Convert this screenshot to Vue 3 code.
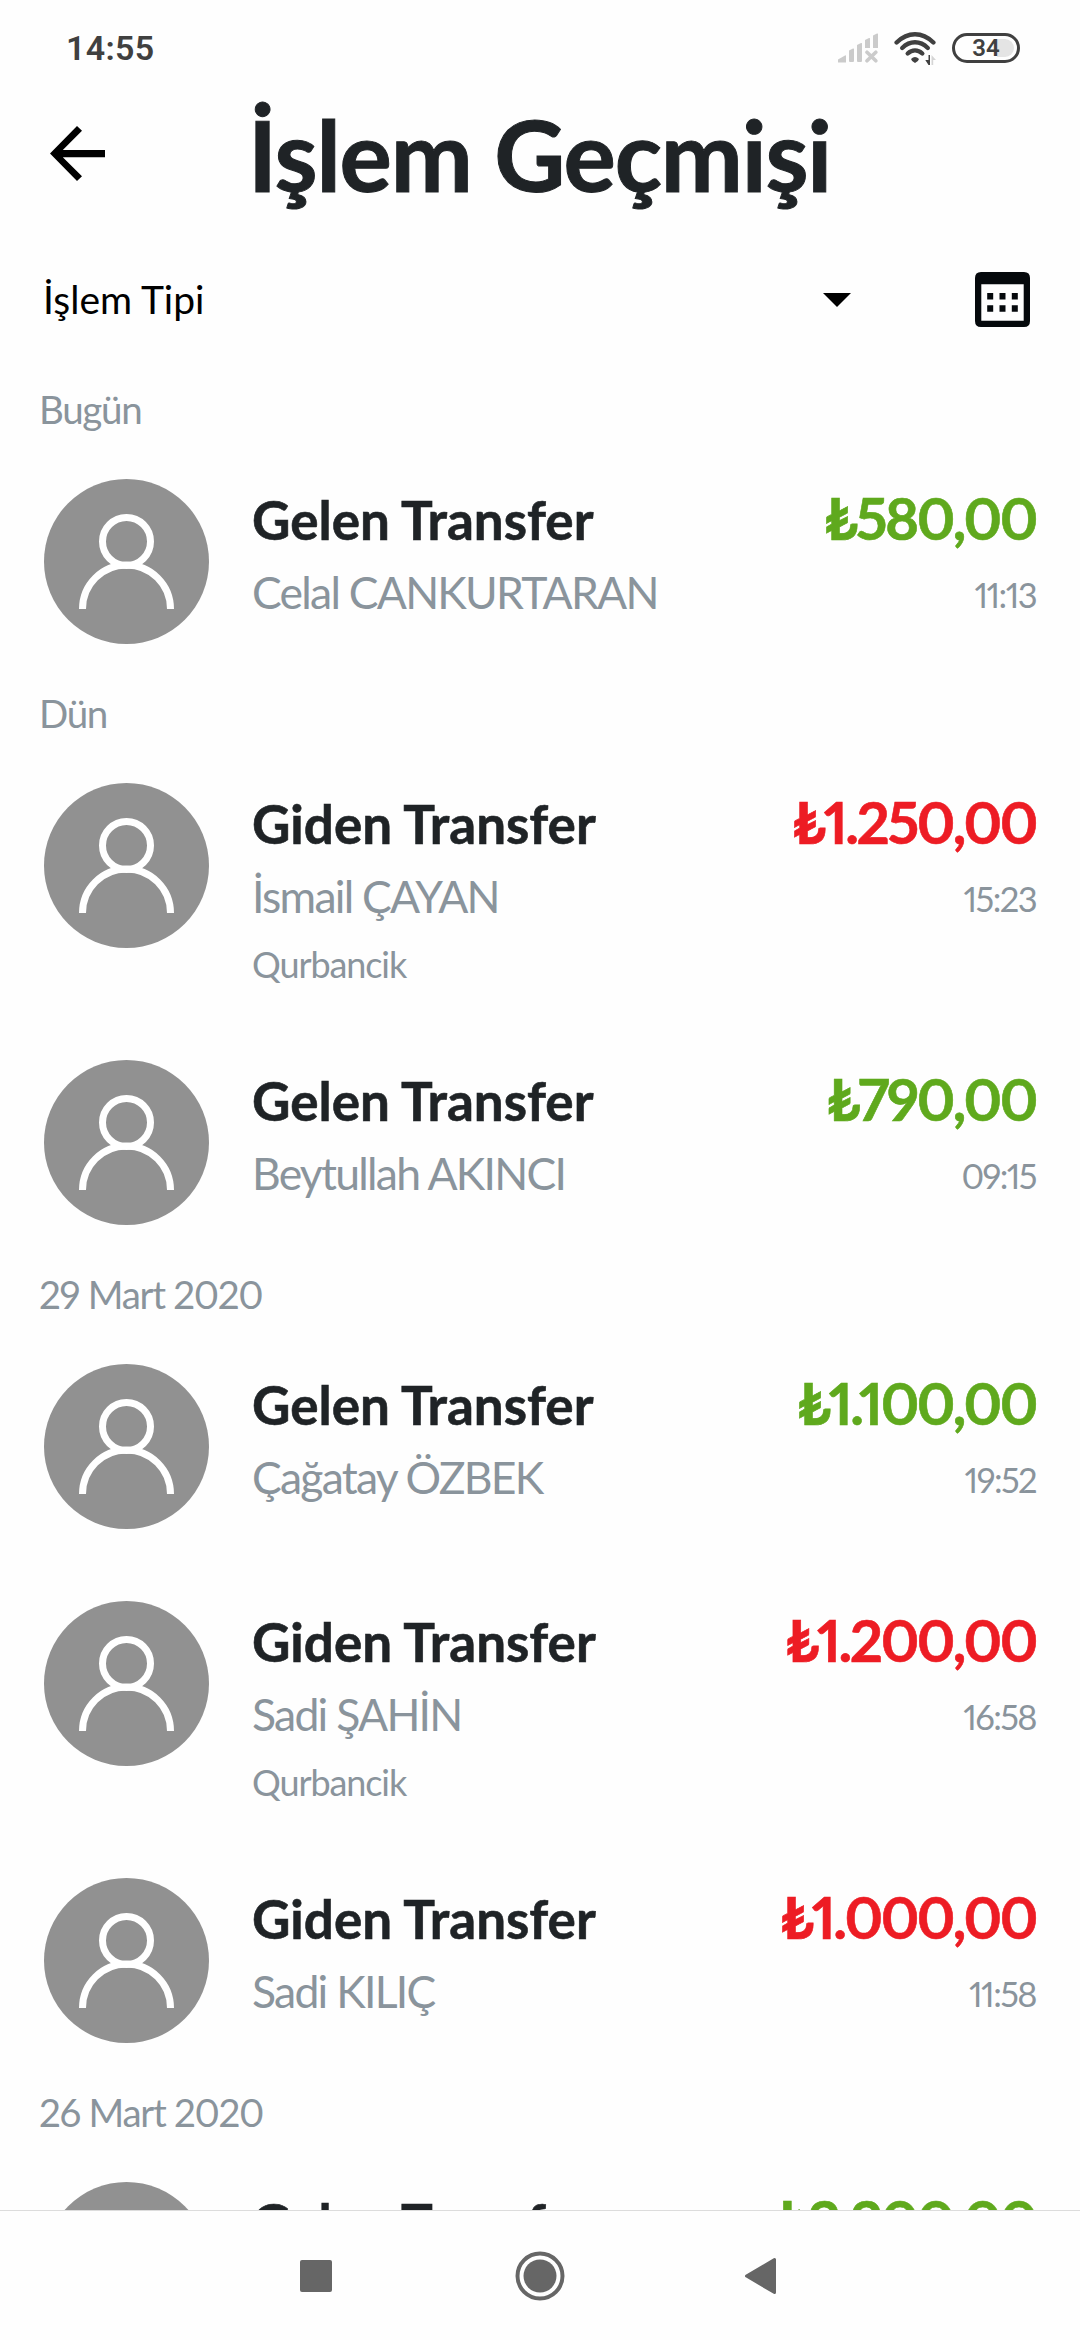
<script setup>
const groups = [
  {
    label: 'Bugün',
    items: [
      { type: 'Gelen Transfer', person: 'Celal CANKURTARAN', amount: '₺580,00', time: '11:13', incoming: true }
    ]
  },
  {
    label: 'Dün',
    items: [
      { type: 'Giden Transfer', person: 'İsmail ÇAYAN', note: 'Qurbancik', amount: '₺1.250,00', time: '15:23' },
      { type: 'Gelen Transfer', person: 'Beytullah AKINCI', amount: '₺790,00', time: '09:15', incoming: true }
    ]
  },
  {
    label: '29 Mart 2020',
    items: [
      { type: 'Gelen Transfer', person: 'Çağatay ÖZBEK', amount: '₺1.100,00', time: '19:52', incoming: true },
      { type: 'Giden Transfer', person: 'Sadi ŞAHİN', note: 'Qurbancik', amount: '₺1.200,00', time: '16:58' },
      { type: 'Giden Transfer', person: 'Sadi KILIÇ', amount: '₺1.000,00', time: '11:58' }
    ]
  },
  {
    label: '26 Mart 2020',
    items: [{ type: 'Gelen Transfer', amount: '₺2.200,00', incoming: true }]
  }
]
</script>

<template>
  <div class="screen">
    <div class="status">
      <span class="clock">14:55</span>
      <div class="status-icons">
        <svg class="signal" width="40" height="30" viewBox="0 0 40 30" fill="#cbcbcb">
          <path d="M0 29.5v-3l7-4q1-.5 1 .5v6.5zM11 17.5l4-2q1-.4 1 .5v12q0 1-1 1h-3q-1 0-1-1zM19 12l4-2q1-.4 1 .5V28q0 1-1 1h-3q-1 0-1-1zM27 7l4-2q1-.4 1 .5V15h-5zM35 2.500l4-2q1-.4 1 .5V15h-5z" />
          <path d="M29 19.200l8.800 8.600M37.800 19.200l-8.800 8.600" stroke="#cbcbcb" stroke-width="3.600" stroke-linecap="round" />
        </svg>
        <svg class="wifi" width="44" height="34" viewBox="0 0 44 34" fill="none" stroke="#404040" stroke-width="4.400" stroke-linecap="round">
          <path d="M2.600 10.500Q11 2.200 21 2.200T39.400 10.500" />
          <path d="M8.200 16Q14 10.300 21 10.300T33.800 16" />
          <path d="M13.700 21.500Q17 18.400 21 18.400T28.300 21.500" />
          <path d="M17 27q4-4 8 0q-.5 2.500-4 4q-3.500-1.500-4-4z" fill="#404040" stroke="none" />
          <path d="M34.500 23v10h1.500V23zM34.500 33l-3.200-5h3.200z" fill="#404040" stroke="none" />
          <path d="M37.500 33V23l4.500 5h-2.800v5z" fill="#d5d5d5" stroke="none" />
        </svg>
        <div class="battery">
          <span class="battery-rest"></span>
          <span class="battery-level">34</span>
        </div>
      </div>
    </div>

    <header class="header">
      <svg class="back" width="55" height="55" viewBox="0 0 55 55">
        <path d="M0 27.500L27 0l5 4.700L12.800 24H55v7.200H12.800L32 50.300 27 55z" fill="#000" />
      </svg>
      <h1 class="title">İşlem Geçmişi</h1>
    </header>

    <div class="filter">
      <div class="select">
        <span class="select-label">İşlem Tipi</span>
        <svg width="28" height="14" viewBox="0 0 28 14"><path d="M0 0h28L14 14z" fill="#000" /></svg>
      </div>
      <svg class="calendar" width="55" height="55" viewBox="0 0 55 55" fill="#05090c">
        <path fill-rule="evenodd" d="M6 0h43q6 0 6 6v43q0 6-6 6H6q-6 0-6-6V6q0-6 6-6zM6.300 12.300v36.400h42.400V12.300z" />
        <path d="M12.200 21h6v6.500h-6zM24.500 21h6v6.500h-6zM36.800 21h6v6.500h-6zM12.200 33.200h6v6.500h-6zM24.500 33.200h6v6.500h-6zM36.800 33.200h6v6.500h-6z" />
      </svg>
    </div>

    <main class="list">
      <section v-for="group in groups" :key="group.label">
        <h2 class="day">{{ group.label }}</h2>
        <article v-for="(item, i) in group.items" :key="i" class="item" :class="{ tall: item.note }">
          <svg class="avatar" width="165" height="165" viewBox="0 0 165 165">
            <circle cx="82.500" cy="82.500" r="82.500" fill="#919191" />
            <g fill="none" stroke="#fff" stroke-width="7">
              <circle cx="82.500" cy="62.500" r="24" />
              <path d="M38.500 130a44 44 0 0 1 88 0" />
            </g>
          </svg>
          <div class="details">
            <div class="type">{{ item.type }}</div>
            <div v-if="item.person" class="person">{{ item.person }}</div>
            <div v-if="item.note" class="note">{{ item.note }}</div>
          </div>
          <div class="figures">
            <div class="amount" :class="item.incoming ? 'in' : 'out'">{{ item.amount }}</div>
            <div v-if="item.time" class="time">{{ item.time }}</div>
          </div>
        </article>
      </section>
    </main>

    <nav class="nav">
      <svg width="32" height="32" viewBox="0 0 32 32"><rect width="32" height="32" rx="2" fill="#666" /></svg>
      <svg width="50" height="50" viewBox="0 0 50 50">
        <circle cx="25" cy="25" r="22.500" fill="none" stroke="#666" stroke-width="4" />
        <circle cx="25" cy="25" r="16.500" fill="#666" />
      </svg>
      <svg class="nav-back" width="32" height="38" viewBox="0 0 32 38"><path d="M1.500 19L29.500 2.500v33z" fill="#666" stroke="#666" stroke-width="3" stroke-linejoin="round" /></svg>
    </nav>
  </div>
</template>

<style>
body {
  margin: 0;
  background: #fefefe;
}
</style>

<style scoped>
.screen {
  display: flex;
  flex-direction: column;
  width: 1080px;
  height: 2340px;
  overflow: hidden;
  background: #fefefe;
  color: #1f2326;
  font-family: Lato, "Liberation Sans", sans-serif;
  font-variant-numeric: proportional-nums;
  white-space: nowrap;
}
.status {
  display: flex;
  justify-content: space-between;
  align-items: center;
  box-sizing: border-box;
  height: 72px;
  padding: 24px 60px 0 66px;
  font-family: Roboto, sans-serif;
  font-variant-numeric: normal;
  font-weight: 600;
  color: #404040;
}
.clock {
  font-size: 34px;
  line-height: 40px;
  letter-spacing: 0.3px;
}
.status-icons {
  display: flex;
  align-items: center;
}
.wifi {
  margin: 2px 14px 0 16px;
}
.battery {
  position: relative;
  box-sizing: border-box;
  width: 68px;
  height: 30px;
  border: 3.5px solid #404040;
  border-radius: 15px;
  text-align: center;
}
.battery-rest {
  position: absolute;
  top: 3px;
  right: 3px;
  width: 17px;
  height: 18px;
  border-radius: 0 9px 9px 0;
  background: #e4e4e4;
}
.battery-level {
  position: relative;
  display: block;
  font-size: 24px;
  line-height: 24px;
}
.header {
  display: flex;
  align-items: center;
  height: 164px;
  padding-left: 50px;
}
.back {
  flex: none;
  margin-bottom: 1px;
}
.title {
  margin: 0 0 0 143px;
  font-size: 98px;
  line-height: 110px;
  font-weight: 700;
  letter-spacing: -1.2px;
  -webkit-text-stroke: 1px currentColor;
}
.filter {
  display: flex;
  align-items: center;
  justify-content: space-between;
  height: 128px;
  padding: 0 50px 0 43px;
  color: #000;
}
.select {
  display: flex;
  align-items: center;
  justify-content: space-between;
  width: 808px;
}
.select-label {
  padding-bottom: 3px;
  font-size: 39px;
  line-height: 48px;
}
.calendar {
  margin-bottom: 1px;
}
.list {
  flex: none;
  height: 1834px;
  padding-top: 12px;
  overflow: hidden;
}
.day {
  height: 67px;
  margin: 0;
  padding-left: 39px;
  font-size: 38.5px;
  line-height: 66px;
  font-weight: 400;
  letter-spacing: -1.3px;
  color: #8a949c;
}
.item {
  display: flex;
  box-sizing: border-box;
  height: 237px;
  padding: 36px 44px 0 44px;
}
.item.tall {
  height: 277px;
}
.avatar {
  flex: none;
}
.details {
  flex: 1;
  margin-left: 43px;
  padding-top: 9px;
}
.type {
  font-size: 53px;
  line-height: 64px;
  font-weight: 700;
  -webkit-text-stroke: 0.6px currentColor;
}
.person {
  margin-top: 10px;
  font-size: 44.5px;
  line-height: 60px;
  letter-spacing: -1.75px;
  color: #8a949c;
}
.note {
  margin-top: 13px;
  font-size: 36px;
  line-height: 50px;
  letter-spacing: -1.1px;
  color: #8a949c;
}
.figures {
  padding-top: 7px;
  text-align: right;
}
.amount {
  font-size: 58px;
  line-height: 64px;
  font-weight: 700;
  letter-spacing: -2.4px;
  -webkit-text-stroke: 0.6px currentColor;
}
.in {
  color: #5fa91d;
}
.out {
  color: #ed1c24;
}
.time {
  margin-top: 21px;
  font-size: 34.5px;
  line-height: 48px;
  letter-spacing: -1.6px;
  color: #8a949c;
}
.nav {
  display: flex;
  align-items: center;
  flex: 1;
  gap: 183px;
  padding-left: 300px;
  border-top: 1px solid #dcdcdc;
}
.nav-back {
  margin-left: -3px;
}
</style>
